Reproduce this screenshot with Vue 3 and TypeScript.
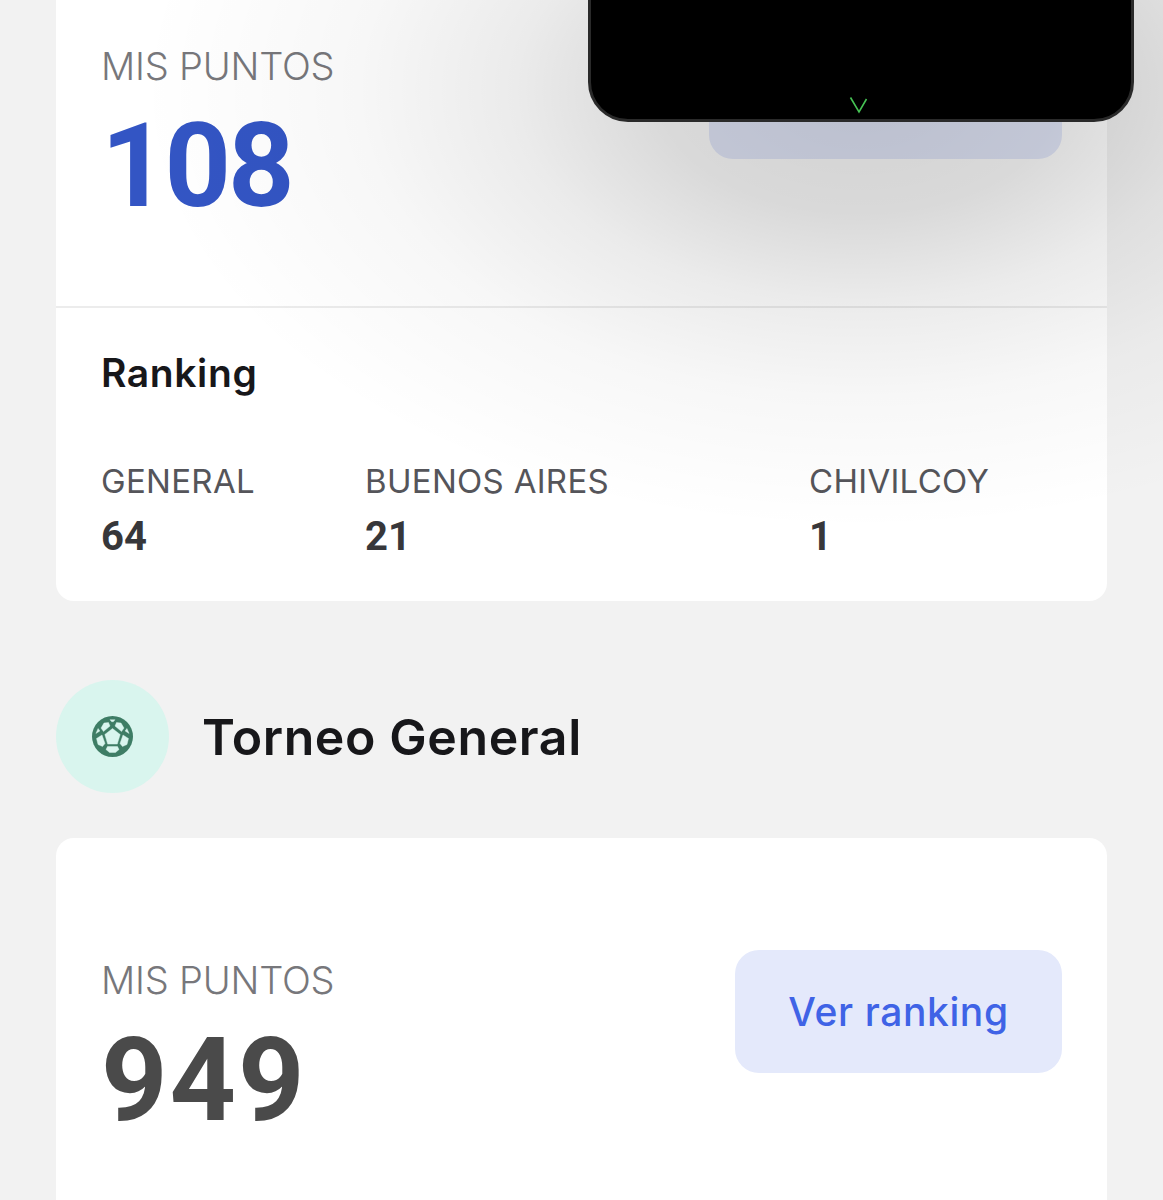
<script setup lang="ts">
const rankings = [
  { name: 'GENERAL', position: 64 },
  { name: 'BUENOS AIRES', position: 21 },
  { name: 'CHIVILCOY', position: 1 }
]

const ballCells = [
  '0,-8 7.7,-2 4.8,7.6 -4.8,7.6 -7.7,-2',
  '-11.5,-8.5 -8.5,-13.5 -4,-14 -2.5,-10.5 -9,-5',
  '11.5,-8.5 8.5,-13.5 4,-14 2.5,-10.5 9,-5',
  '-10.5,-1.5 -7.5,7 -10,10 -14.5,8 -16,2',
  '10.5,-1.5 7.5,7 10,10 14.5,8 16,2',
  '-5,10 5,10 6.5,13 3,16 -3,16 -6.5,13',
  '-2.5,-16.8 2.5,-16.8 0.8,-14.8 -0.8,-14.8',
  '-16.6,-3 -14.4,-8 -12.6,-5.5',
  '16.6,-3 14.4,-8 12.6,-5.5'
]
</script>

<template>
  <div class="page">
    <section class="card points-card">
      <div class="points-row">
        <div class="points">
          <span class="points-label">MIS PUNTOS</span>
          <strong class="points-value blue">108</strong>
        </div>
        <button type="button" class="ranking-btn wide">Ver ranking</button>
      </div>

      <div class="ranking">
        <h3 class="ranking-title">Ranking</h3>
        <div class="ranking-grid">
          <div v-for="item in rankings" :key="item.name">
            <div class="ranking-name">{{ item.name }}</div>
            <div class="ranking-pos">{{ item.position }}</div>
          </div>
        </div>
      </div>
    </section>

    <header class="tournament">
      <span class="tournament-icon">
        <svg width="41" height="41" viewBox="-20.5 -20.5 41 41">
          <circle r="20.5" fill="#3e7d65" />
          <polygon
            v-for="cell in ballCells"
            :key="cell"
            :points="cell"
            fill="#d9f5ee"
            stroke="#d9f5ee"
            stroke-width="0.4"
            stroke-linejoin="round"
          />
        </svg>
      </span>
      <h2 class="tournament-title">Torneo General</h2>
    </header>

    <section class="card second-card">
      <div class="points">
        <span class="points-label">MIS PUNTOS</span>
        <strong class="points-value grey">949</strong>
      </div>
      <button type="button" class="ranking-btn">Ver ranking</button>
    </section>

    <div class="panel-shadow"></div>
    <div class="phone-panel">
      <svg class="chevron" width="20" height="18" viewBox="0 0 20 18">
        <path d="M1.5 1.5 L10 16 L17.5 3" fill="none" stroke="#46c254" stroke-width="1.6" />
      </svg>
    </div>
  </div>
</template>

<style scoped>
.page {
  position: relative;
  height: 1200px;
  overflow: hidden;
  padding: 0 56px;
  box-sizing: border-box;
  background: #f2f2f2;
  font-family: Inter, "Liberation Sans", sans-serif;
}

.card {
  background: #fff;
  border-radius: 18px;
}

.points-card {
  margin-top: -30px;
}

.points-row {
  display: flex;
  justify-content: space-between;
  height: 338px;
  padding: 66px 45px 0;
  box-sizing: border-box;
  border-bottom: 2px solid #ececec;
}

.points {
  display: flex;
  flex-direction: column;
  align-items: flex-start;
}

.points-label {
  margin-top: 7px;
  font-size: 38px;
  line-height: 46px;
  font-weight: 300;
  letter-spacing: -0.2px;
  color: #77777b;
}

.points-value {
  margin-top: 9px;
  font-family: Roboto, "Liberation Sans", sans-serif;
  font-size: 116px;
  line-height: 136px;
  font-weight: 700;
}

.blue {
  color: #3355c4;
  letter-spacing: -3px;
}

.grey {
  color: #4a4a4a;
  letter-spacing: 2px;
}

.ranking-btn {
  width: 327px;
  height: 123px;
  border: none;
  border-radius: 24px;
  background: #e4e9fb;
  color: #3f63e6;
  font-family: inherit;
  font-size: 39px;
  font-weight: 500;
  letter-spacing: 0.6px;
}

.ranking-btn.wide {
  width: 353px;
}

.ranking {
  height: 293px;
  padding: 37px 45px 0;
  box-sizing: border-box;
}

.ranking-title {
  margin: 0;
  font-size: 39px;
  line-height: 56px;
  font-weight: 600;
  letter-spacing: 0.6px;
  color: #17171a;
}

.ranking-grid {
  display: grid;
  grid-template-columns: 264px 444px 1fr;
  margin-top: 60px;
}

.ranking-name {
  font-size: 33px;
  line-height: 40px;
  font-weight: 400;
  letter-spacing: 0.3px;
  color: #55555a;
}

.ranking-pos {
  margin-top: 15px;
  font-family: Roboto, "Liberation Sans", sans-serif;
  font-size: 40px;
  line-height: 42px;
  font-weight: 700;
  color: #37373a;
}

.tournament {
  display: flex;
  align-items: center;
  gap: 33px;
  margin-top: 79px;
}

.tournament-icon {
  display: flex;
  align-items: center;
  justify-content: center;
  width: 113px;
  height: 113px;
  border-radius: 50%;
  background: #d9f5ee;
}

.tournament-title {
  margin: 0;
  font-size: 50px;
  line-height: 60px;
  font-weight: 600;
  letter-spacing: 0.6px;
  color: #17171a;
}

.second-card {
  display: flex;
  justify-content: space-between;
  height: 500px;
  margin-top: 45px;
  padding: 112px 45px 0;
  box-sizing: border-box;
}

.panel-shadow {
  position: absolute;
  inset: 0 0 auto 0;
  height: 640px;
  pointer-events: none;
  background: radial-gradient(
    ellipse 720px 440px at 860px 90px,
    rgba(0, 0, 0, 0.18) 0%,
    rgba(0, 0, 0, 0.15) 28%,
    rgba(0, 0, 0, 0.08) 48%,
    rgba(0, 0, 0, 0.03) 70%,
    rgba(0, 0, 0, 0) 100%
  );
}

.phone-panel {
  position: absolute;
  top: -40px;
  left: 588px;
  width: 546px;
  height: 162px;
  box-sizing: border-box;
  border: 3px solid #2a2a2a;
  border-radius: 40px;
  background: #000;
}

.chevron {
  position: absolute;
  left: 258px;
  top: 133px;
}
</style>
